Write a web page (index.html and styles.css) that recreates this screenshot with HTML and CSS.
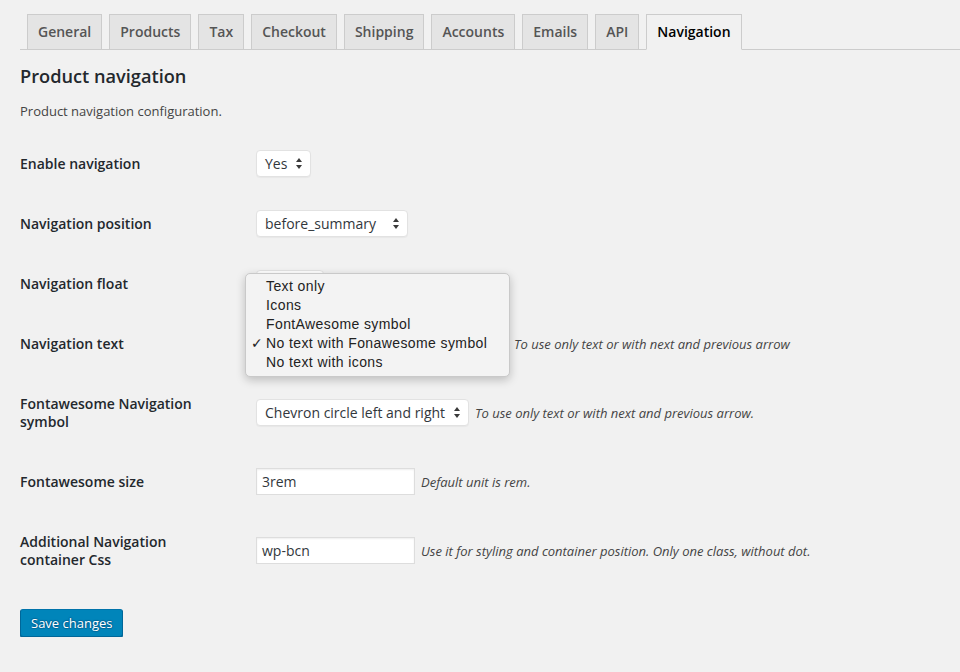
FILE: index.html
```html
<!DOCTYPE html>
<html lang="en">
<head>
<meta charset="utf-8">
<title>Product navigation</title>
<link rel="stylesheet" href="styles.css">
</head>
<body>
<div class="wrap">
  <nav class="tabs">
    <a class="tab">General</a>
    <a class="tab">Products</a>
    <a class="tab">Tax</a>
    <a class="tab">Checkout</a>
    <a class="tab">Shipping</a>
    <a class="tab">Accounts</a>
    <a class="tab">Emails</a>
    <a class="tab">API</a>
    <a class="tab active">Navigation</a>
  </nav>

  <h2 class="title">Product navigation</h2>
  <p class="intro">Product navigation configuration.</p>

  <div class="form">
    <div class="row">
      <div class="label">Enable navigation</div>
      <div class="field">
        <div class="select w-yes"><span>Yes</span><svg class="arrows" width="6" height="11" viewBox="0 0 6 11"><path d="M3 0L6 4H0Z M3 11L0 7H6Z" fill="#3a3a3a"/></svg></div>
      </div>
    </div>
    <div class="row">
      <div class="label">Navigation position</div>
      <div class="field">
        <div class="select w-pos"><span>before_summary</span><svg class="arrows" width="6" height="11" viewBox="0 0 6 11"><path d="M3 0L6 4H0Z M3 11L0 7H6Z" fill="#3a3a3a"/></svg></div>
      </div>
    </div>
    <div class="row">
      <div class="label">Navigation float</div>
      <div class="field">
        <div class="select w-float"><span>right</span><svg class="arrows" width="6" height="11" viewBox="0 0 6 11"><path d="M3 0L6 4H0Z M3 11L0 7H6Z" fill="#3a3a3a"/></svg></div>
      </div>
    </div>
    <div class="row">
      <div class="label">Navigation text</div>
      <div class="field">
        <div class="select w-text"><span>No text with Fonawesome symbol</span><svg class="arrows" width="6" height="11" viewBox="0 0 6 11"><path d="M3 0L6 4H0Z M3 11L0 7H6Z" fill="#3a3a3a"/></svg></div>
        <span class="desc">To use only text or with next and previous arrow</span>
      </div>
    </div>
    <div class="row">
      <div class="label">Fontawesome Navigation symbol</div>
      <div class="field">
        <div class="select w-sym"><span>Chevron circle left and right</span><svg class="arrows" width="6" height="11" viewBox="0 0 6 11"><path d="M3 0L6 4H0Z M3 11L0 7H6Z" fill="#3a3a3a"/></svg></div>
        <span class="desc">To use only text or with next and previous arrow.</span>
      </div>
    </div>
    <div class="row">
      <div class="label">Fontawesome size</div>
      <div class="field">
        <div class="input">3rem</div>
        <span class="desc">Default unit is rem.</span>
      </div>
    </div>
    <div class="row">
      <div class="label">Additional Navigation container Css</div>
      <div class="field">
        <div class="input">wp-bcn</div>
        <span class="desc">Use it for styling and container position. Only one class, without dot.</span>
      </div>
    </div>
  </div>

  <div class="submit">
    <button class="button-primary">Save changes</button>
  </div>
</div>

<div class="popup">
  <div class="opt">Text only</div>
  <div class="opt">Icons</div>
  <div class="opt">FontAwesome symbol</div>
  <div class="opt checked"><span class="check">✓</span>No text with Fonawesome symbol</div>
  <div class="opt">No text with icons</div>
</div>
</body>
</html>
```

FILE: styles.css
```css
html, body {
  margin: 0;
  padding: 0;
  background: #f1f1f1;
  font-family: "Open Sans", "Liberation Sans", sans-serif;
  color: #444;
}

.wrap {
  padding-left: 20px;
}

.tabs {
  display: flex;
  gap: 7px;
  padding-top: 14px;
  padding-left: 7px;
  border-bottom: 1px solid #ccc;
  align-items: flex-start;
}

.tab {
  display: block;
  height: 24px;
  padding: 5px 10px;
  line-height: 24px;
  font-size: 14px;
  font-weight: 600;
  color: #555;
  background: #e4e4e4;
  border: 1px solid #ccc;
  border-bottom: none;
  white-space: nowrap;
}

.tab.active {
  background: #f1f1f1;
  color: #000;
  border-bottom: 1px solid #f1f1f1;
  margin-bottom: -1px;
}

.title {
  margin: 14px 0 0;
  font-size: 18.2px;
  line-height: 24px;
  font-weight: 600;
  color: #23282d;
}

.intro {
  margin: 14px 0 0;
  font-size: 13px;
  line-height: 19.5px;
  color: #444;
}

.form {
  margin-top: 12px;
}

.row {
  display: flex;
  align-items: center;
}

.label {
  width: 200px;
  margin-right: 36px;
  padding: 21px 0;
  font-size: 14px;
  line-height: 18px;
  font-weight: 600;
  color: #23282d;
}

.field {
  display: flex;
  align-items: center;
}

.select {
  box-sizing: border-box;
  height: 27px;
  display: flex;
  align-items: center;
  justify-content: space-between;
  padding: 0 8px 0 8px;
  background: #fff;
  border: 1px solid #e2e2e2;
  border-radius: 4px;
  box-shadow: 0 1px 1px rgba(0, 0, 0, 0.04);
  font-size: 14px;
  color: #32373c;
  white-space: nowrap;
}

.arrows {
  flex: none;
  margin-left: 8px;
}

.w-yes { width: 55px; }
.w-pos { width: 152px; }
.w-float { width: 68px; }
.w-text { width: 252px; }
.w-sym { width: 213px; }

.input {
  box-sizing: border-box;
  width: 159px;
  height: 27px;
  padding: 0 5px;
  line-height: 25px;
  background: #fff;
  border: 1px solid #ddd;
  box-shadow: inset 0 1px 2px rgba(0, 0, 0, 0.07);
  font-size: 14px;
  color: #32373c;
}

.desc {
  margin-left: 6px;
  font-size: 13px;
  font-style: italic;
  color: #444;
  white-space: nowrap;
}

.submit {
  margin-top: 19px;
}

.button-primary {
  box-sizing: border-box;
  height: 28px;
  padding: 0 10px 1px;
  font-family: "Open Sans", "Liberation Sans", sans-serif;
  font-size: 13px;
  line-height: 26px;
  color: #fff;
  background: #0085ba;
  border: 1px solid #0073aa;
  border-color: #0073aa #006799 #006799;
  border-radius: 3px;
  box-shadow: 0 1px 0 #006799;
  text-shadow: 0 -1px 1px #006799, 1px 0 1px #006799, 0 1px 1px #006799, -1px 0 1px #006799;
  cursor: pointer;
}

.popup {
  position: absolute;
  left: 245px;
  top: 273px;
  width: 265px;
  box-sizing: border-box;
  padding: 3px 0 4px;
  background: #f3f3f3;
  border: 1px solid #c9c9c9;
  border-radius: 5px;
  box-shadow: 0 3px 10px rgba(0, 0, 0, 0.22);
  font-family: "Liberation Sans", Arial, sans-serif;
  font-size: 14px;
  letter-spacing: 0.4px;
  color: #222;
}

.opt {
  position: relative;
  height: 19px;
  line-height: 19px;
  padding-left: 20px;
  white-space: nowrap;
}

.check {
  position: absolute;
  left: 5px;
  top: 0;
  font-family: "DejaVu Sans", sans-serif;
  font-size: 14px;
  font-weight: bold;
  letter-spacing: 0;
}
```
